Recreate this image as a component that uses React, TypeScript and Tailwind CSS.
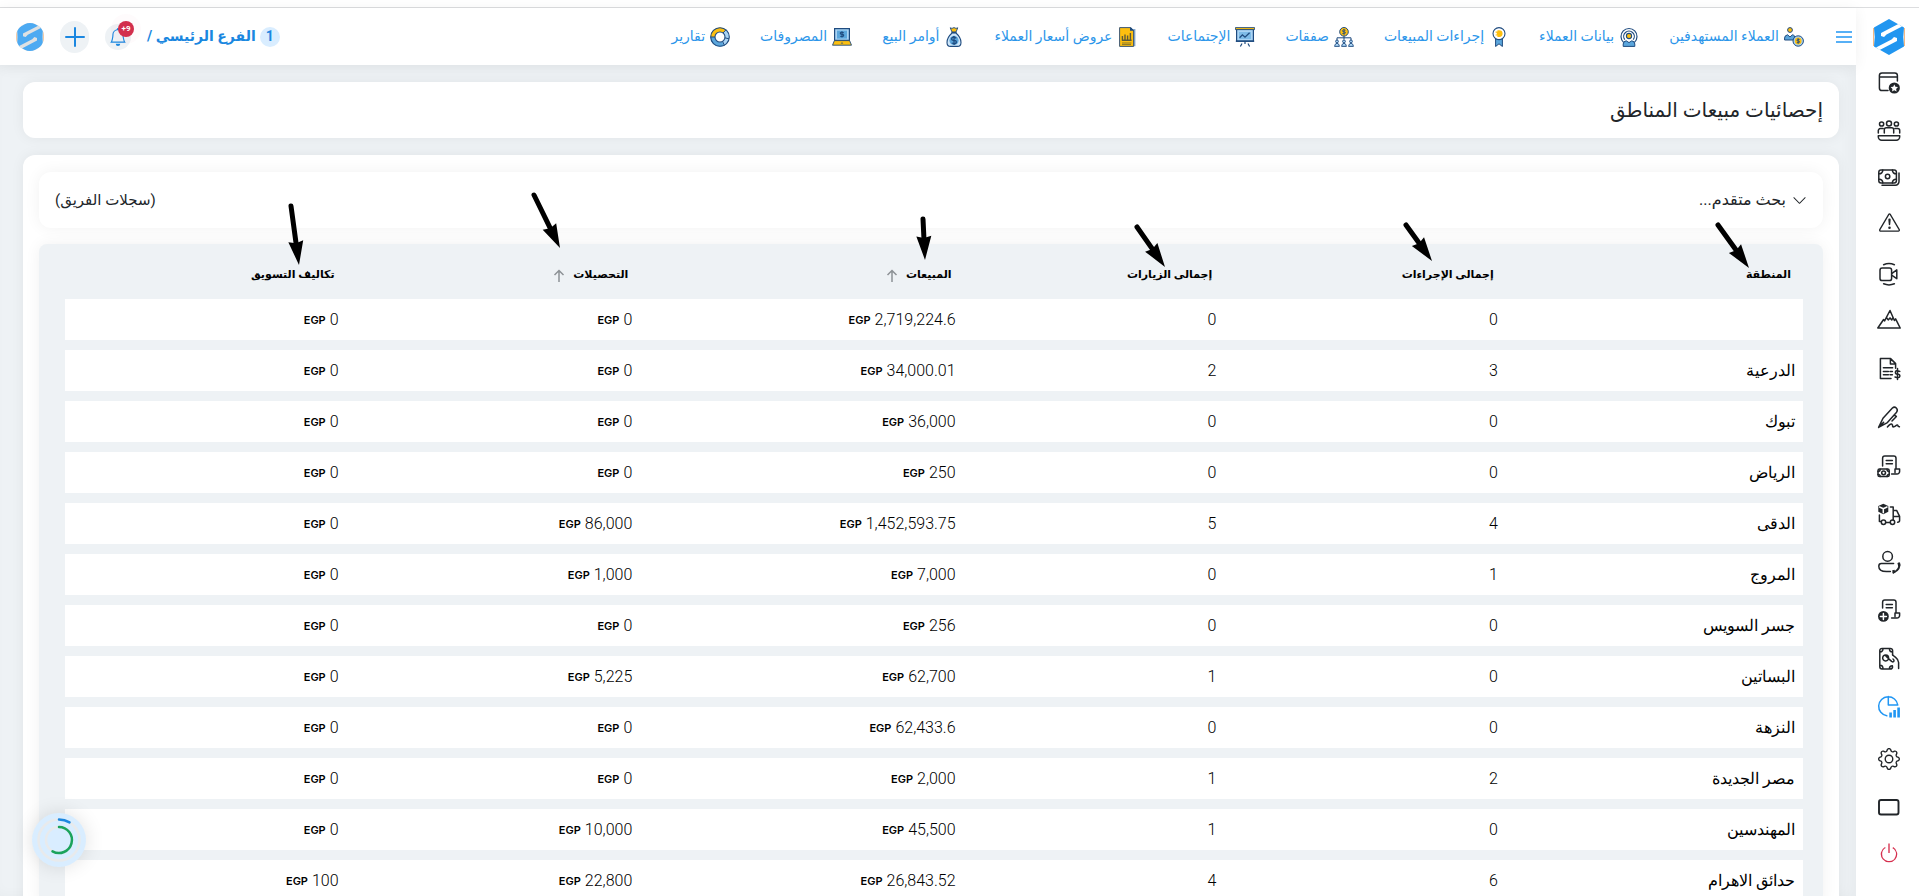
import React from 'react';
import { BsExclamationTriangle, BsGear, BsPower, BsBell, BsChevronDown } from 'react-icons/bs';

const navy = '#1f4b7f';
const sky = '#5ba6dc';
const pale = '#a9d4f5';
const gold = '#fdbf0f';

const navItems = [
  {
    label: 'العملاء المستهدفين',
    icon: (
      <>
        <circle cx="6" cy="3" r="2.4" fill={gold} stroke={navy} />
        <path d="M.6 13V11q0-2.6 3-3.2L6 10l2.4-2.2q1.4.3 2 1V13z" fill={sky} stroke={navy} />
        <circle cx="14.2" cy="14" r="5.2" fill={pale} stroke={navy} />
        <circle cx="14.2" cy="14" r="3.4" fill={gold} />
        <path d="M15.6 12.6q-2.6-1-2.7.3t1.4 1.1q1.5.2 1.3 1.2t-2.8.4M14.2 11.4v5.2" fill="none" stroke={navy} strokeWidth=".9" />
      </>
    ),
  },
  {
    label: 'بيانات العملاء',
    icon: (
      <>
        <path d="M4.6 15.4A8 8 0 1 1 15.4 15.4M5.8 12.6A5.3 5.3 0 1 1 14.2 12.6" fill="none" stroke={navy} strokeWidth="1.2" />
        <circle cx="10" cy="9" r="2.6" fill={gold} stroke={navy} strokeWidth="1.1" />
        <path d="M4.2 19.4V17q0-2.6 3-3.2L10 15.6l2.8-1.8q3 .6 3 3.2v2.4z" fill={sky} stroke={navy} />
      </>
    ),
  },
  {
    label: 'إجراءات المبيعات',
    icon: (
      <>
        <path d="M6.6 11.5h6.8v8L10 16.8l-3.4 2.7z" fill={sky} stroke={navy} />
        <circle cx="10" cy="6.6" r="6" fill="#fff" stroke={navy} strokeWidth="1.1" />
        <path d="M10.2 3.2a3.4 3.4 0 0 1 0 6.8H8.4V8.6H6.6V7.4h1.2V5.8H6.6V4.6h1.8V3.2z" fill={gold} />
      </>
    ),
  },
  {
    label: 'صفقات',
    icon: (
      <>
        <circle cx="10" cy="4.8" r="4.3" fill={gold} stroke={navy} />
        <path d="M11.5 3.3q-2.9-1-3 .3t1.5 1.2q1.7.2 1.4 1.3t-3 .4M10 2v5.6" fill="none" stroke={navy} strokeWidth=".9" />
        <path d="M10 9v3.5M3 13.4v-2.6h14v2.6" fill="none" stroke={navy} />
        {[3, 10, 17].map((x) => (
          <g key={x} fill={pale} stroke={navy} strokeWidth=".9">
            <circle cx={x} cy="14.4" r="1.4" />
            <path d={`M${x - 2.4} 19.4q0-2.6 2.4-3.2q2.4.6 2.4 3.2z`} />
          </g>
        ))}
      </>
    ),
  },
  {
    label: 'الإجتماعات',
    icon: (
      <>
        <path d="M10 14v3M7 16.5 5.4 19.5M13 16.5l1.6 3" stroke={navy} strokeWidth="1.2" />
        <path d="M1.6 2.5h16.8v11.7H1.6z" fill={pale} stroke={navy} strokeWidth="1.2" />
        <path d="M.4.6h19.2v2H.4z" fill={gold} stroke={navy} strokeWidth=".9" />
        <path d="M.8 14.2h18.4" stroke={navy} strokeWidth="1.4" />
        <path d="M4 5h12v7H4z" fill={sky} opacity=".55" />
        <path d="M4.6 10.8 7.4 7.8l2.6 2.4 4.6-4.4" fill="none" stroke={navy} strokeWidth="1.3" />
      </>
    ),
  },
  {
    label: 'عروض أسعار العملاء',
    icon: (
      <>
        <path d="M5 2h13.4v17.2H5z" fill="#88a9c9" />
        <path d="M2.6.6h11l3 3.2v15.6h-14z" fill={gold} stroke="#3d5875" />
        <path d="M13 .4h1.2l3 3.4H13z" fill={navy} />
        <path d="M5.4 13V9M8 13V7.4M10.6 13V8.6M13.4 13V6M4.8 13.2h9.8" stroke="#5b5a3a" strokeWidth="1.4" />
        <path d="M5 16h9.4M5 17.6h9" stroke="#7a6f2d" strokeWidth=".9" />
      </>
    ),
  },
  {
    label: 'أوامر البيع',
    icon: (
      <>
        <path d="M6.2.8 8 1.4l2-.8 2 .8 1.8-.6L12 5H8z" fill={gold} stroke={navy} strokeWidth=".9" />
        <path d="M8 6h4q5 4.6 5 9.4 0 4-3.6 4H6.6q-3.6 0-3.6-4Q3 10.6 8 6z" fill="#cfe7fa" stroke={navy} strokeWidth="1.1" />
        <circle cx="10" cy="13.4" r="4.6" fill={sky} />
        <path d="M12.4 11q-4.5-1.7-4.7.5t2.4 1.8q2.6.4 2.2 2.2t-4.6.5M10 9v9" fill="none" stroke={navy} strokeWidth="1.3" />
        <path d="M7.4 5.5h5.2" stroke={navy} strokeWidth="1.2" />
      </>
    ),
  },
  {
    label: 'المصروفات',
    icon: (
      <>
        <path d="M2.6 1.6h14.8v11.8H2.6z" fill={pale} stroke={navy} strokeWidth="1.2" />
        <path d="M5 3.6h10v8H5z" fill={sky} />
        <path d="M11.7 5.6q-3.3-1-3.4.4t1.7 1.3q2 .2 1.6 1.5t-3.4.4M10 4.2v6.4" fill="none" stroke={navy} strokeWidth="1.1" />
        <path d="M2.4 13.6h15.2l1.9 4.6H.5z" fill={gold} stroke={navy} strokeWidth=".9" />
        <path d="m8.6 16.6 1.4-1.4 1.4 1.4z" fill={navy} />
      </>
    ),
  },
  {
    label: 'تقارير',
    icon: (
      <>
        <circle cx="10" cy="10" r="7.3" fill="none" stroke={pale} strokeWidth="4.4" />
        <path d="M2.8 10A7.3 7.3 0 0 1 14.5 4.3" fill="none" stroke={gold} strokeWidth="4.4" />
        <path d="M2.7 10A7.3 7.3 0 0 0 13 16.7" fill="none" stroke={sky} strokeWidth="4.4" />
        <circle cx="10" cy="10" r="9.3" fill="none" stroke={navy} strokeWidth="1.1" />
        <circle cx="10" cy="10" r="5" fill="#fff" stroke={navy} strokeWidth="1.1" />
        <path d="M13 6 16 2.8M.8 10H5M12.6 14.4l1.8 4M14.8 10.8l4.2 1" stroke={navy} />
      </>
    ),
  },
];

// 24x24 drawings, stroked with the current colour
const sideIcons = [
  {
    label: 'المفضلة',
    icon: (
      <>
        <path d="M11 19.5H5a2.6 2.6 0 0 1-2.6-2.6V4.6A2.6 2.6 0 0 1 5 2h12.8a2.6 2.6 0 0 1 2.6 2.6V10M2.4 6h18" />
        <circle cx="17.3" cy="17" r="5.6" fill="currentColor" stroke="none" />
        <path d="m17.3 13.4 1.1 2.4 2.6.3-1.9 1.8.5 2.6-2.3-1.3-2.3 1.3.5-2.6-1.9-1.8 2.6-.3z" fill="#fff" stroke="none" />
      </>
    ),
  },
  {
    label: 'الفريق',
    icon: (
      <>
        <circle cx="4.6" cy="5" r="2.1" />
        <circle cx="12" cy="4.4" r="2.5" />
        <circle cx="19.4" cy="5" r="2.1" />
        <path d="M1.3 14v-2.4a2 2 0 0 1 2-2H6M22.7 14v-2.4a2 2 0 0 0-2-2H18M7.3 14v-3.2a2 2 0 0 1 2-2h5.4a2 2 0 0 1 2 2V14M1.3 16.7h21.4v1.1a3.4 3.4 0 0 1-3.4 3.4H4.7a3.4 3.4 0 0 1-3.4-3.4z" />
      </>
    ),
  },
  {
    label: 'المدفوعات',
    icon: (
      <>
        <rect x="1.8" y="3" width="17.6" height="13" rx="2.2" />
        <circle cx="10.6" cy="9.5" r="2.2" />
        <path d="M1.8 6.8A3.6 3.6 0 0 0 5.8 3M15.4 3a3.6 3.6 0 0 0 4 3.8M1.8 12.2A3.6 3.6 0 0 1 5.8 16M15.4 16a3.6 3.6 0 0 1 4-3.8M22 6v8.6a3.6 3.6 0 0 1-3.6 3.6H5" />
      </>
    ),
  },
  { label: 'التنبيهات', icon: <BsExclamationTriangle size={21} x={2} y={-3} stroke="none" /> },
  {
    label: 'الاجتماعات',
    icon: (
      <>
        <rect x="3" y="5" width="11.6" height="12.6" rx="2.2" />
        <path d="m15 10.3 4.8-3.4v8.8L15 12.4M6.6 1.7q5.4-2.2 10.8 0M6.6 20.8q5.4 2.2 10.8 0" />
      </>
    ),
  },
  {
    label: 'الأهداف',
    icon: <path d="M.8 17 6.6 8.5l1 1.4L13-.5l4.4 10 1.2-1.6L23.2 17zM9.4 6.500l1.8 2.4 1.8-2 1.8 2L16 6.5" />,
  },
  {
    label: 'الفواتير',
    icon: (
      <>
        <path d="M14 19.4H3.4V-.4h10.2l5 5v4.6M13.4-.2V5h5M6.4 8.8h9.2M6.4 12.4h5M6.4 15.8h5M13 12.4h2.4M13 15.8h2.4" />
        <path d="M22.8 12.4q-4.2-1.8-4.4.6t2.2 2q2.6.4 2.2 2.4t-4.8.6M20.5 9.6v11" />
      </>
    ),
  },
  {
    label: 'العقود',
    icon: <path d="M1.6 20.4 6 11.2 15.4 1q2-1.8 3.9 0t.3 4.2L10.4 15.6zM1.6 20.4l5-5M17 8l2.4 1.4L15 14M10.4 20q3.2-3.8 4.4-2.8t.8 2.2q.6 1.2 3-.6t2.6.6l1.2.4" />,
  },
  {
    label: 'كشف الحساب',
    icon: (
      <>
        <path d="M5.6 11V3.2A2.2 2.2 0 0 1 7.8 1h9a2.2 2.2 0 0 1 2.2 2.2V14M9.2 5.4h6.2M9.2 8.8h6.2M14.6 19H20a2.6 2.6 0 0 0 2.6-2.6V14H18v3.6" />
        <rect x="1" y="14" width="11.2" height="7.6" rx="1.6" />
        <circle cx="6.6" cy="17.8" r="1.9" />
        <path d="M1 16.4q2.2 0 2.2-2.2M12.2 16.4q-2.2 0-2.2-2.2M1 19.4q2.2 0 2.2 2.2M12.2 19.4q-2.2 0-2.2 2.2" />
      </>
    ),
  },
  {
    label: 'التوصيل',
    icon: (
      <>
        <path d="m6.3.8 5 2.2v5.8l-5 2.4-5-2.4V3z" fill="currentColor" stroke="none" />
        <path d="m2.6 4 3.7 1.7L10 4M6.3 5.7v4" stroke="#fff" />
        <path d="M2.4 12v6.4H4M8.8 19.6h4M13.4 4h2.8v13.2M16.2 7.4h3.4l3 6v4.2q0 1.6-2 1.6M16.2 13.4h6.2" />
        <circle cx="6.5" cy="19.3" r="2.2" />
        <circle cx="15.5" cy="19.3" r="2.2" />
      </>
    ),
  },
  {
    label: 'خدمة العملاء',
    icon: (
      <>
        <circle cx="10.6" cy="5.4" r="4.8" />
        <path d="M16.6 12.6H4.4a2.6 2.6 0 0 0-2.6 2.6q0 5.4 7.6 5.4h4" />
        <path d="M22 12.4q1.8 6-5.6 9.2" strokeWidth="2" />
        <path d="m20.400 12 2.600-.4.600 3-2.400.6zM15 19.600l2.400-.8 1.200 2.400-2.400 1.400z" fill="currentColor" stroke="none" />
      </>
    ),
  },
  {
    label: 'إضافة مستند',
    icon: (
      <>
        <path d="M5.6 9V3.2A2.2 2.2 0 0 1 7.8 1h9a2.2 2.2 0 0 1 2.2 2.2V14M9.2 5.4h6.2M9.2 8.8h6.2M14.6 19H20a2.6 2.6 0 0 0 2.6-2.6V14H18v3.6" />
        <circle cx="6.4" cy="17.4" r="5.4" fill="currentColor" stroke="none" />
        <path d="M6.4 14.4v6M3.4 17.4h6" stroke="#fff" strokeWidth="1.5" />
      </>
    ),
  },
  {
    label: 'التحصيل',
    icon: (
      <>
        <path d="M15.6 8V3.6A2.2 2.2 0 0 0 13.4 1.4H5a2.2 2.2 0 0 0-2.2 2.2v16.2A2.2 2.2 0 0 0 5 22h8.4a2.2 2.2 0 0 0 2.2-2.2M3 5q3 0 3-3.4M12.4 1.6Q12.4 5 15.4 5M3 18.2q3 0 3 3.6M12.4 21.8q0-3 3-3" />
        <path d="M11 12.8a3 3 0 1 1 .6-2.4M15.6 8l3 2.4q3 2.4 3 5v6.2M9 9.2l5.6 5.2q2 1.2 2.4-.6 0-1-1-1.8" />
      </>
    ),
  },
  {
    label: 'الإحصائيات',
    active: true,
    icon: (
      <>
        <path d="M9.8 20.8A9.6 9.6 0 1 1 20.8 10h-9.5V1.5" />
        <path d="M13.6 22.6v-5M17.6 22.6v-7.6M21.6 22.6V12.4" strokeWidth="2.6" strokeLinecap="butt" />
      </>
    ),
  },
];

const columns = [
  { label: 'المنطقة', width: 'w-[17.1%]', arrow: 'right-[53px] top-[14px]', dx: 31, dy: 43 },
  { label: 'إجمالى الإجراءات', width: 'w-[16.2%]', arrow: 'right-[73px] top-[7px]', dx: 26, dy: 36 },
  { label: 'إجمالى الزيارات', width: 'w-[15%]', arrow: 'right-[58px] top-[13px]', dx: 28, dy: 40 },
  { label: 'المبيعات', width: 'w-[18.6%]', arrow: 'right-[38px] top-[6px]', dx: 2, dy: 41, sortable: true },
  { label: 'التحصيلات', width: 'w-[16.9%]', arrow: 'right-[79px] -top-[6px]', dx: 26, dy: 53, sortable: true },
  { label: 'تكاليف التسويق', width: 'w-[16.2%]', arrow: 'right-[47px] top-[11px]', dx: 8, dy: 59 },
];

const rows = [
  { region: '', actions: 0, visits: 0, sales: '2,719,224.6', collected: '0', cost: '0' },
  { region: 'الدرعية', actions: 3, visits: 2, sales: '34,000.01', collected: '0', cost: '0' },
  { region: 'تبوك', actions: 0, visits: 0, sales: '36,000', collected: '0', cost: '0' },
  { region: 'الرياض', actions: 0, visits: 0, sales: '250', collected: '0', cost: '0' },
  { region: 'الدقى', actions: 4, visits: 5, sales: '1,452,593.75', collected: '86,000', cost: '0' },
  { region: 'المروج', actions: 1, visits: 0, sales: '7,000', collected: '1,000', cost: '0' },
  { region: 'جسر السويس', actions: 0, visits: 0, sales: '256', collected: '0', cost: '0' },
  { region: 'البساتين', actions: 0, visits: 1, sales: '62,700', collected: '5,225', cost: '0' },
  { region: 'النزهة', actions: 0, visits: 0, sales: '62,433.6', collected: '0', cost: '0' },
  { region: 'مصر الجديدة', actions: 2, visits: 1, sales: '2,000', collected: '0', cost: '0' },
  { region: 'المهندسين', actions: 0, visits: 1, sales: '45,500', collected: '10,000', cost: '0' },
  { region: 'حدائق الاهرام', actions: 6, visits: 4, sales: '26,843.52', collected: '22,800', cost: '100' },
];

function Logo({ className, stripe = '#fff' }: { className: string; stripe?: string }) {
  return (
    <svg viewBox="0 0 32 36" className={className} aria-hidden="true">
      <path d="M.8 9q-1 9 0 18M31.2 9q1 9 0 18" fill="none" stroke="#f5b983" strokeWidth="1.5" />
      <path d="M16 0 31 8.5Q29.500 18 31 27.5L16 36 1 27.5Q2.5 18 1 8.5z" fill="#2196f0" />
      <path d="m25.3 5 3.7 2.5-15.5 8-2.5 2.5L8 17v-3zM6.7 31 3 28.5l15.5-8L21 18l3 1v3z" fill={stripe} />
    </svg>
  );
}

function Money({ value }: { value: string }) {
  return (
    <span className="flex items-center gap-1">
      <span>{value}</span>
      <span className="font-['Inter'] text-[11px] font-semibold">EGP</span>
    </span>
  );
}

// Tip of the arrow sits at the svg origin
function Arrow({ dx, dy, className }: { dx: number; dy: number; className: string }) {
  const length = Math.hypot(dx, dy);
  const angle = (Math.atan2(dy, dx) * 180) / Math.PI;
  return (
    <svg className={`absolute size-px overflow-visible ${className}`} aria-hidden="true">
      <g transform={`rotate(${angle})`}>
        <path d={`M${-length} 0H-20`} stroke="#000" strokeWidth="5" strokeLinecap="round" />
        <path d="M0 0-24-7.5-22 0-24 7.5z" />
      </g>
    </svg>
  );
}

function SideButton({ label, className = 'text-[#212529]', children }: { label: string; className?: string; children: React.ReactNode }) {
  return (
    <button type="button" aria-label={label} className={`flex h-12 items-center justify-center ${className}`}>
      {children}
    </button>
  );
}

function Sidebar() {
  return (
    <aside className="flex w-[63px] shrink-0 flex-col bg-white pl-0.5">
      <a href="/" aria-label="الرئيسية" className="flex h-[51px] items-center justify-center pt-1.5">
        <Logo className="h-9 w-8" />
      </a>
      {sideIcons.map((item) => (
        <SideButton key={item.label} label={item.label} className={item.active ? 'text-[#2196f3]' : 'text-[#212529]'}>
          <svg viewBox="0 0 24 24" className="size-6 overflow-visible" fill="none" stroke="currentColor" strokeWidth="1.5" strokeLinecap="round" strokeLinejoin="round">
            {item.icon}
          </svg>
        </SideButton>
      ))}
      <div className="mt-1 flex flex-col">
        <SideButton label="الإعدادات">
          <BsGear className="size-[22px]" />
        </SideButton>
        <SideButton label="ملء الشاشة">
          <svg viewBox="0 0 24 24" className="size-6" fill="none" stroke="currentColor" strokeWidth="1.9">
            <rect x="2" y="5" width="19.5" height="14.5" rx="2" />
          </svg>
        </SideButton>
        <SideButton label="تسجيل الخروج" className="pb-1 text-[#d6304f]">
          <BsPower className="size-[22px]" />
        </SideButton>
      </div>
    </aside>
  );
}

function Header() {
  return (
    <header className="relative flex h-[57px] shrink-0 items-center justify-between bg-white pr-1 pl-4 shadow-[0_2px_14px_rgba(0,0,0,0.06)]">
      <div className="flex items-center">
        <button type="button" aria-label="القائمة" className="text-[#2196f3]">
          <svg viewBox="0 0 16 12" className="h-3 w-4" stroke="currentColor" strokeWidth="1.3">
            <path d="M0 1h16M0 6h16M0 11h16" />
          </svg>
        </button>
        <nav className="mr-8 flex items-center gap-[30px]">
          {navItems.map((item) => (
            <a key={item.label} href="#" className="flex items-center gap-[5px] text-[14px] whitespace-nowrap text-[#2c96ea]">
              <svg viewBox="0 0 20 20" className="size-5" aria-hidden="true">
                {item.icon}
              </svg>
              {item.label}
            </a>
          ))}
        </nav>
      </div>

      <div className="flex items-center">
        <a href="#" className="flex items-center gap-1 text-[14px] font-bold text-[#1b87e0]">
          <span className="flex size-5 items-center justify-center rounded-full bg-[#d9edff]">1</span>
          <span>الفرع الرئيسي /</span>
        </a>
        <button type="button" aria-label="الإشعارات" className="relative mr-4 flex size-[26px] items-center justify-center rounded-full bg-[#eef2f5] text-[#1b87e0]">
          <BsBell className="size-[18px]" />
          <span className="absolute -top-[3px] -right-[3px] flex size-4 items-center justify-center rounded-full bg-[#d22f4d] text-[8px] font-bold text-white shadow-[0_0_0_7px_rgba(210,47,77,0.02)]">
            9+
          </span>
        </button>
        <button type="button" aria-label="إضافة" className="mr-4 flex h-8 w-[29px] items-center justify-center rounded-full bg-[#eef2f5] text-[#1b87e0]">
          <svg viewBox="0 0 20 20" className="size-5" stroke="currentColor" strokeWidth="2" strokeLinecap="round">
            <path d="M10 1v18M1 10h18" />
          </svg>
        </button>
        <button type="button" aria-label="الحساب" className="mr-4 flex size-7 items-center justify-center overflow-hidden rounded-full bg-[#d8dadc] opacity-80">
          <Logo className="h-8 w-7 shrink-0" stripe="#d8dadc" />
        </button>
      </div>
    </header>
  );
}

export default function App() {
  return (
    <div dir="rtl" className="flex h-screen flex-col bg-white pt-[7px] font-['Roboto','DejaVu_Sans',sans-serif] text-[#212529]">
      <div className="flex min-h-0 flex-1 border-t border-[#dcdddf]">
        <Sidebar />
        <div className="flex min-w-0 flex-1 flex-col bg-[#eef2f5]">
          <Header />
          <main className="flex-1 overflow-y-auto py-[17px] pr-[17px] pl-[23px] shadow-[inset_-6px_0_14px_rgba(0,0,0,0.03)] [scrollbar-width:none]">
            <section className="flex h-14 items-center rounded-xl bg-white px-4 shadow-[0_0_14px_rgba(0,0,0,0.06)]">
              <h1 className="text-[20px] font-medium">إحصائيات مبيعات المناطق</h1>
            </section>

            <section className="mt-[17px] rounded-xl bg-white px-4 py-[17px] shadow-[0_0_14px_rgba(0,0,0,0.06)]">
              <div className="flex h-14 items-center justify-between rounded-xl bg-white px-4 shadow-[0_0_16px_rgba(0,0,0,0.06)]">
                <button type="button" className="flex items-center gap-1.5 text-[16px]">
                  <BsChevronDown className="size-[15px]" />
                  بحث متقدم...
                </button>
                <span className="text-[15px]">(سجلات الفريق)</span>
              </div>

              <div className="relative mt-4 rounded-lg bg-[#eef2f5] pr-5 pl-[26px] shadow-[0_0_16px_rgba(0,0,0,0.06)]">
                <table className="w-full table-fixed border-separate border-spacing-x-0 border-spacing-y-2.5 text-right text-black">
                  <thead>
                    <tr className="h-[35px]">
                      {columns.map((col) => (
                        <th key={col.label} scope="col" className={`relative px-3 pt-2 text-[11px] font-bold ${col.width}`}>
                          <span className="flex items-center gap-2 whitespace-nowrap">
                            {col.label}
                            {col.sortable && (
                              <svg viewBox="0 0 12 14" className="h-3.5 w-3" fill="none" stroke="#8d9296" strokeWidth="1.5">
                                <path d="M6 13V1.500M1.500 6 6 1.500 10.500 6" />
                              </svg>
                            )}
                          </span>
                          <Arrow dx={col.dx} dy={col.dy} className={col.arrow} />
                        </th>
                      ))}
                    </tr>
                  </thead>
                  <tbody>
                    {rows.map((row, index) => (
                      <tr key={index} className="h-[41px] bg-white text-[16px] leading-6 font-light">
                        <td className="px-2">{row.region}</td>
                        <td className="px-2">{row.actions}</td>
                        <td className="px-2">{row.visits}</td>
                        <td className="px-2"><Money value={row.sales} /></td>
                        <td className="px-2"><Money value={row.collected} /></td>
                        <td className="px-2"><Money value={row.cost} /></td>
                      </tr>
                    ))}
                  </tbody>
                </table>
              </div>
            </section>
          </main>
        </div>
      </div>

      <button type="button" aria-label="التقدم" className="fixed bottom-[29px] left-8 size-[54px] rounded-full bg-[#d9edff] shadow-[0_0_20px_rgba(0,0,0,0.12)]">
        <svg viewBox="0 0 54 54" className="size-full" fill="none" strokeWidth="2.5">
          <circle cx="27" cy="27" r="20.5" stroke="#e8eaec" />
          <circle cx="27" cy="27" r="13" stroke="#e8eaec" />
          <path d="M27 6.5a20.5 20.5 0 0 1 10.500 2.900" stroke="#1b87e0" strokeLinecap="round" />
          <path d="M27 14a13 13 0 1 1-6.5 24.300" stroke="#1ba35c" strokeLinecap="round" />
        </svg>
      </button>
    </div>
  );
}
